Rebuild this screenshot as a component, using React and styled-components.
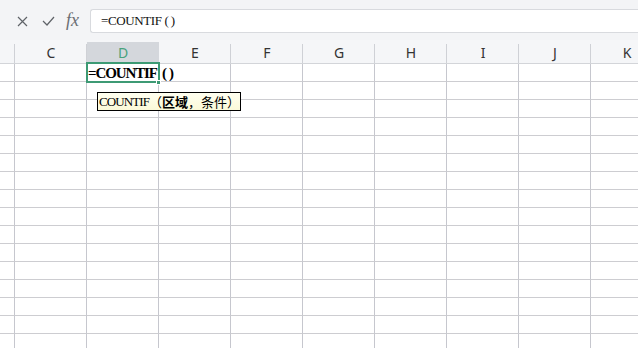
import React from "react";
import styled, { createGlobalStyle } from "styled-components";

const GlobalStyle = createGlobalStyle`
  html, body { margin: 0; padding: 0; background: #ffffff; overflow: hidden; }
  body { font-family: "Noto Sans", "Liberation Sans", sans-serif; }
  * { box-sizing: border-box; }
`;

const GREEN = "#3d9a74";
const COLS = ["B", "C", "D", "E", "F", "G", "H", "I", "J", "K"];
const TEMPLATE = "15px repeat(9, 72px)";
const ROWS = 16;

const Page = styled.div`
  position: relative;
  width: 638px;
  height: 348px;
  overflow: hidden;
  display: flex;
  flex-direction: column;
  background: #fff;
`;

const FormulaBar = styled.div`
  height: 40px;
  flex: none;
  background: #f3f4f6;
  display: flex;
  align-items: flex-start;
  padding-top: 9px;
`;

const IconGroup = styled.div`
  width: 90px;
  height: 24px;
  flex: none;
  display: flex;
  align-items: center;
  padding-left: 17px;
`;

const IconSlot = styled.span`
  display: inline-flex;
  align-items: center;
  margin-left: ${(p) => p.$gap || 0}px;
  color: #5f6368;
`;

const Fx = styled.span`
  font-family: "Liberation Serif", serif;
  font-style: italic;
  font-size: 18px;
  line-height: 1;
  color: #6b6e73;
  margin-left: 11px;
  margin-top: -2px;
`;

const FormulaInput = styled.div`
  flex: 1;
  height: 24px;
  background: #ffffff;
  border: 1px solid #d8dade;
  border-right: none;
  border-radius: 3px 0 0 3px;
  display: flex;
  align-items: center;
  padding-left: 10px;
  font-family: "Liberation Serif", serif;
  font-size: 13px;
  letter-spacing: -0.4px;
  color: #111;
  white-space: pre;
`;

const Parens = styled.span`
  letter-spacing: ${(p) => p.$spacing}px;
  margin-left: ${(p) => p.$offset}px;
`;

const HeaderRow = styled.div`
  height: 24px;
  flex: none;
  display: grid;
  grid-template-columns: ${TEMPLATE};
  padding-top: 2px;
  background: #f5f6f8;
  border-bottom: 1px solid #d3d5d9;
`;

const HeaderCell = styled.div`
  position: relative;
  height: 21px;
  display: flex;
  align-items: center;
  justify-content: center;
  font-size: 14px;
  color: ${(p) => (p.$active ? "#48a27c" : "#333")};
  background: ${(p) => (p.$active ? "#d4d7dc" : "transparent")};
  &::after {
    content: "";
    position: absolute;
    right: 0;
    top: 2px;
    bottom: 0;
    width: 1px;
    background: ${(p) => (p.$active ? "transparent" : "#cfd1d6")};
  }
`;

const Sheet = styled.div`
  position: relative;
  flex: 1;
`;

const Row = styled.div`
  display: grid;
  grid-template-columns: ${TEMPLATE};
  height: 18px;
`;

const Cell = styled.div`
  border-right: 1px solid #c6c7ce;
  border-bottom: 1px solid #cdcdd1;
`;

const ActiveCell = styled.div`
  position: absolute;
  left: 86px;
  top: -2px;
  width: 74px;
  height: 21px;
  border: 2px solid ${GREEN};
  background: #fff;
  z-index: 2;
`;

const CellText = styled.span`
  position: absolute;
  left: 0;
  top: 1px;
  font-family: "Liberation Serif", serif;
  font-weight: 700;
  font-size: 15px;
  letter-spacing: -1.1px;
  line-height: 17px;
  color: #000;
  white-space: pre;
`;

const FillHandle = styled.span`
  position: absolute;
  right: -3px;
  bottom: -4px;
  width: 5px;
  height: 5px;
  background: ${GREEN};
  border: 1px solid #fff;
`;

const Tooltip = styled.div`
  position: absolute;
  left: 97px;
  top: 28px;
  width: max-content;
  height: 19px;
  border: 1px solid #000;
  background: linear-gradient(#fffff0, #fbf9d8);
  display: flex;
  align-items: center;
  padding: 0 0 0 1px;
  font-family: "Liberation Serif", serif;
  font-size: 13px;
  letter-spacing: -0.9px;
  color: #000;
  white-space: pre;
  text-spacing-trim: space-all;
  z-index: 3;
`;

const Cjk = styled.span`
  font-family: "Noto Sans CJK SC", sans-serif;
  font-size: 13px;
  letter-spacing: 0;
  text-spacing-trim: space-all;
  font-weight: ${(p) => (p.$bold ? 700 : 400)};
  line-height: 1;
`;

const CloseIcon = () => (
  <svg width="11" height="11" viewBox="0 0 11 11">
    <path d="M1 1L10 10M10 1L1 10" stroke="currentColor" strokeWidth="1.2" fill="none" />
  </svg>
);

const CheckIcon = () => (
  <svg width="13" height="10" viewBox="0 0 13 10">
    <path d="M1 5L5 9L12 1" stroke="currentColor" strokeWidth="1.2" fill="none" />
  </svg>
);

export default function App() {
  return (
    <>
      <GlobalStyle />
      <Page>
        <FormulaBar>
          <IconGroup>
            <IconSlot><CloseIcon /></IconSlot>
            <IconSlot $gap={14}><CheckIcon /></IconSlot>
            <Fx>fx</Fx>
          </IconGroup>
          <FormulaInput>
            =COUNTIF<Parens $spacing={2} $offset={3}>()</Parens>
          </FormulaInput>
        </FormulaBar>
        <HeaderRow>
          {COLS.map((c) => (
            <HeaderCell key={c} $active={c === "D"}>
              {c === "B" ? "" : c}
            </HeaderCell>
          ))}
        </HeaderRow>
        <Sheet>
          {Array.from({ length: ROWS }).map((_, r) => (
            <Row key={r}>
              {COLS.map((c) => (
                <Cell key={c} />
              ))}
            </Row>
          ))}
          <ActiveCell>
            <CellText>
              =COUNTIF<Parens $spacing={2} $offset={5}>()</Parens>
            </CellText>
            <FillHandle />
          </ActiveCell>
          <Tooltip>
            COUNTIF<Cjk>（</Cjk><Cjk $bold>区域</Cjk><Cjk>，条件）</Cjk>
          </Tooltip>
        </Sheet>
      </Page>
    </>
  );
}
